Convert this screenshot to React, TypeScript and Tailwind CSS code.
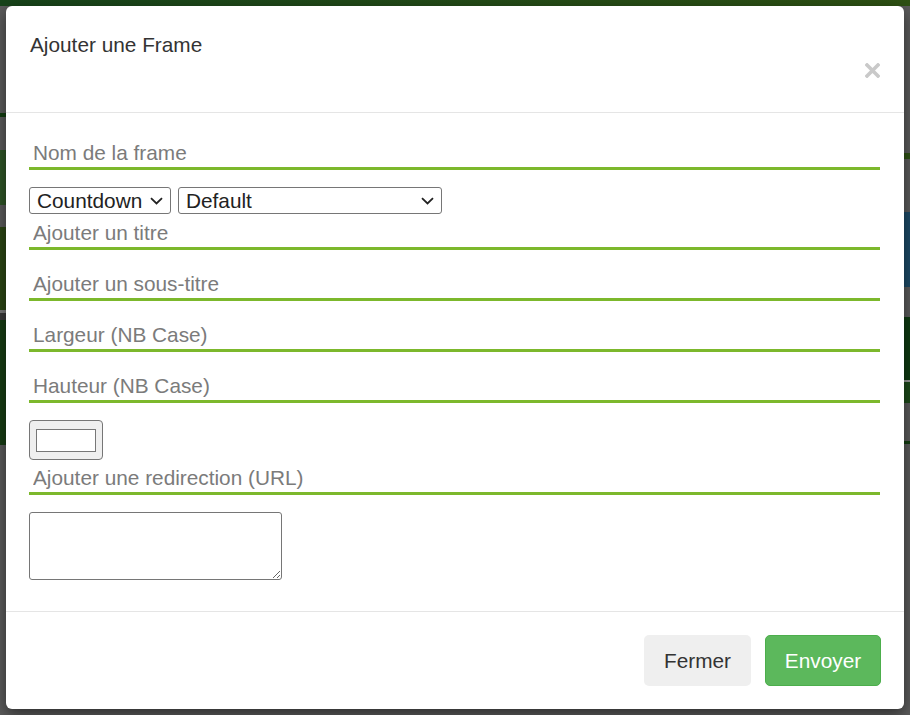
import React from "react";

const font = { fontFamily: '"Liberation Sans", Arial, sans-serif' };

function Field({ placeholder, className = "" }: { placeholder: string; className?: string }) {
  return (
    <input
      type="text"
      placeholder={placeholder}
      className={`block w-full h-[32px] border-b-[3px] border-[#7cb82c] px-[4px] text-[20.8px] text-[#333] placeholder:text-[#7b7b7b] outline-none ${className}`}
    />
  );
}

function FakeSelect({ label, width }: { label: string; width: string }) {
  return (
    <div
      className={`${width} h-[27px] flex items-center justify-between border border-[#767676] rounded-[3px] pl-[7px] pr-[7px] text-[20.8px] leading-[25px] text-[#222]`}
    >
      <span>{label}</span>
      <svg width="13" height="8" viewBox="0 0 13 8" fill="none">
        <path d="M1 1.2 L6.5 6.5 L12 1.2" stroke="#222" strokeWidth="1.8" />
      </svg>
    </div>
  );
}

export default function App() {
  return (
    <div className="relative w-full h-[715px] overflow-hidden bg-[#5b5b5b]" style={font}>
      {/* page behind the backdrop */}
      <div className="h-[6px] bg-gradient-to-r from-[#17441a] to-[#2e5113]"></div>
      <div className="flex h-[709px]">
        <div className="w-[6px] flex flex-col">
          <div className="h-[107px]"></div>
          <div className="h-[4px] bg-[#123d10]"></div>
          <div className="h-[33px]"></div>
          <div className="h-[55px] bg-[#2f5527]"></div>
          <div className="h-[22px]"></div>
          <div className="h-[83px] bg-[#2c4614]"></div>
          <div className="h-[3px] bg-[#7a7a7a]"></div>
          <div className="h-[7px] bg-[#3a3a3a]"></div>
          <div className="h-[125px] bg-[#173d14]"></div>
        </div>
        <div className="flex-1"></div>
        <div className="w-[6px] flex flex-col">
          <div className="h-[147px]"></div>
          <div className="h-[6px] bg-[#2e5014]"></div>
          <div className="h-[53px]"></div>
          <div className="h-[75px] bg-[#1d4a66]"></div>
          <div className="h-[30px]"></div>
          <div className="h-[63px] bg-[#0f3a12]"></div>
          <div className="h-[2px] bg-[#9a9a9a]"></div>
          <div className="h-[21px] bg-[#1d4a1a]"></div>
          <div className="h-[38px]"></div>
          <div className="h-[3px] bg-[#123d10]"></div>
        </div>
      </div>

      {/* modal */}
      <div className="absolute left-[6px] top-[6px] w-[898px] h-[703px] bg-white rounded-[6px] shadow-[0_5px_15px_rgba(0,0,0,0.5)] flex flex-col">
        <div className="h-[107px] flex items-start justify-between px-[24px] pt-[24px] border-b border-[#e5e5e5]">
          <h4 className="text-[20.8px] leading-[30px] text-[#333]">Ajouter une Frame</h4>
          <svg className="mt-[33px]" width="15" height="15" viewBox="0 0 15 15">
            <path d="M2 2 L13 13 M13 2 L2 13" stroke="#c9c9c9" strokeWidth="3.6" strokeLinecap="square" />
          </svg>
        </div>

        <div className="pt-[25px] pb-[31px] pl-[23px] pr-[24px]">
          <Field placeholder="Nom de la frame" className="mb-[17px]" />
          <div className="flex gap-[7px]">
            <FakeSelect label="Countdown" width="w-[142px]" />
            <FakeSelect label="Default" width="w-[264px]" />
          </div>
          <Field placeholder="Ajouter un titre" className="mt-[4px] mb-[19px]" />
          <Field placeholder="Ajouter un sous-titre" className="mb-[19px]" />
          <Field placeholder="Largeur (NB Case)" className="mb-[19px]" />
          <Field placeholder="Hauteur (NB Case)" className="mb-[17px]" />
          <div className="w-[74px] h-[40px] bg-[#efefef] border border-[#767676] rounded-[4px] flex items-center justify-center">
            <div className="w-[60px] h-[23px] bg-white border border-[#777]"></div>
          </div>
          <Field placeholder="Ajouter une redirection (URL)" className="mt-[3px] mb-[17px]" />
          <textarea className="block w-[253px] h-[68px] border border-[#767676] rounded-[3px] outline-none"></textarea>
        </div>

        <div className="flex justify-end gap-[14px] border-t border-[#e5e5e5] pt-[23px] pr-[23px]">
          <button className="w-[107px] h-[51px] rounded-[5px] bg-[#efefef] text-[20.8px] text-[#333]">Fermer</button>
          <button className="w-[116px] h-[51px] rounded-[5px] bg-[#5cb85c] border border-[#4cae4c] text-[20.8px] text-white">
            Envoyer
          </button>
        </div>
      </div>
    </div>
  );
}
